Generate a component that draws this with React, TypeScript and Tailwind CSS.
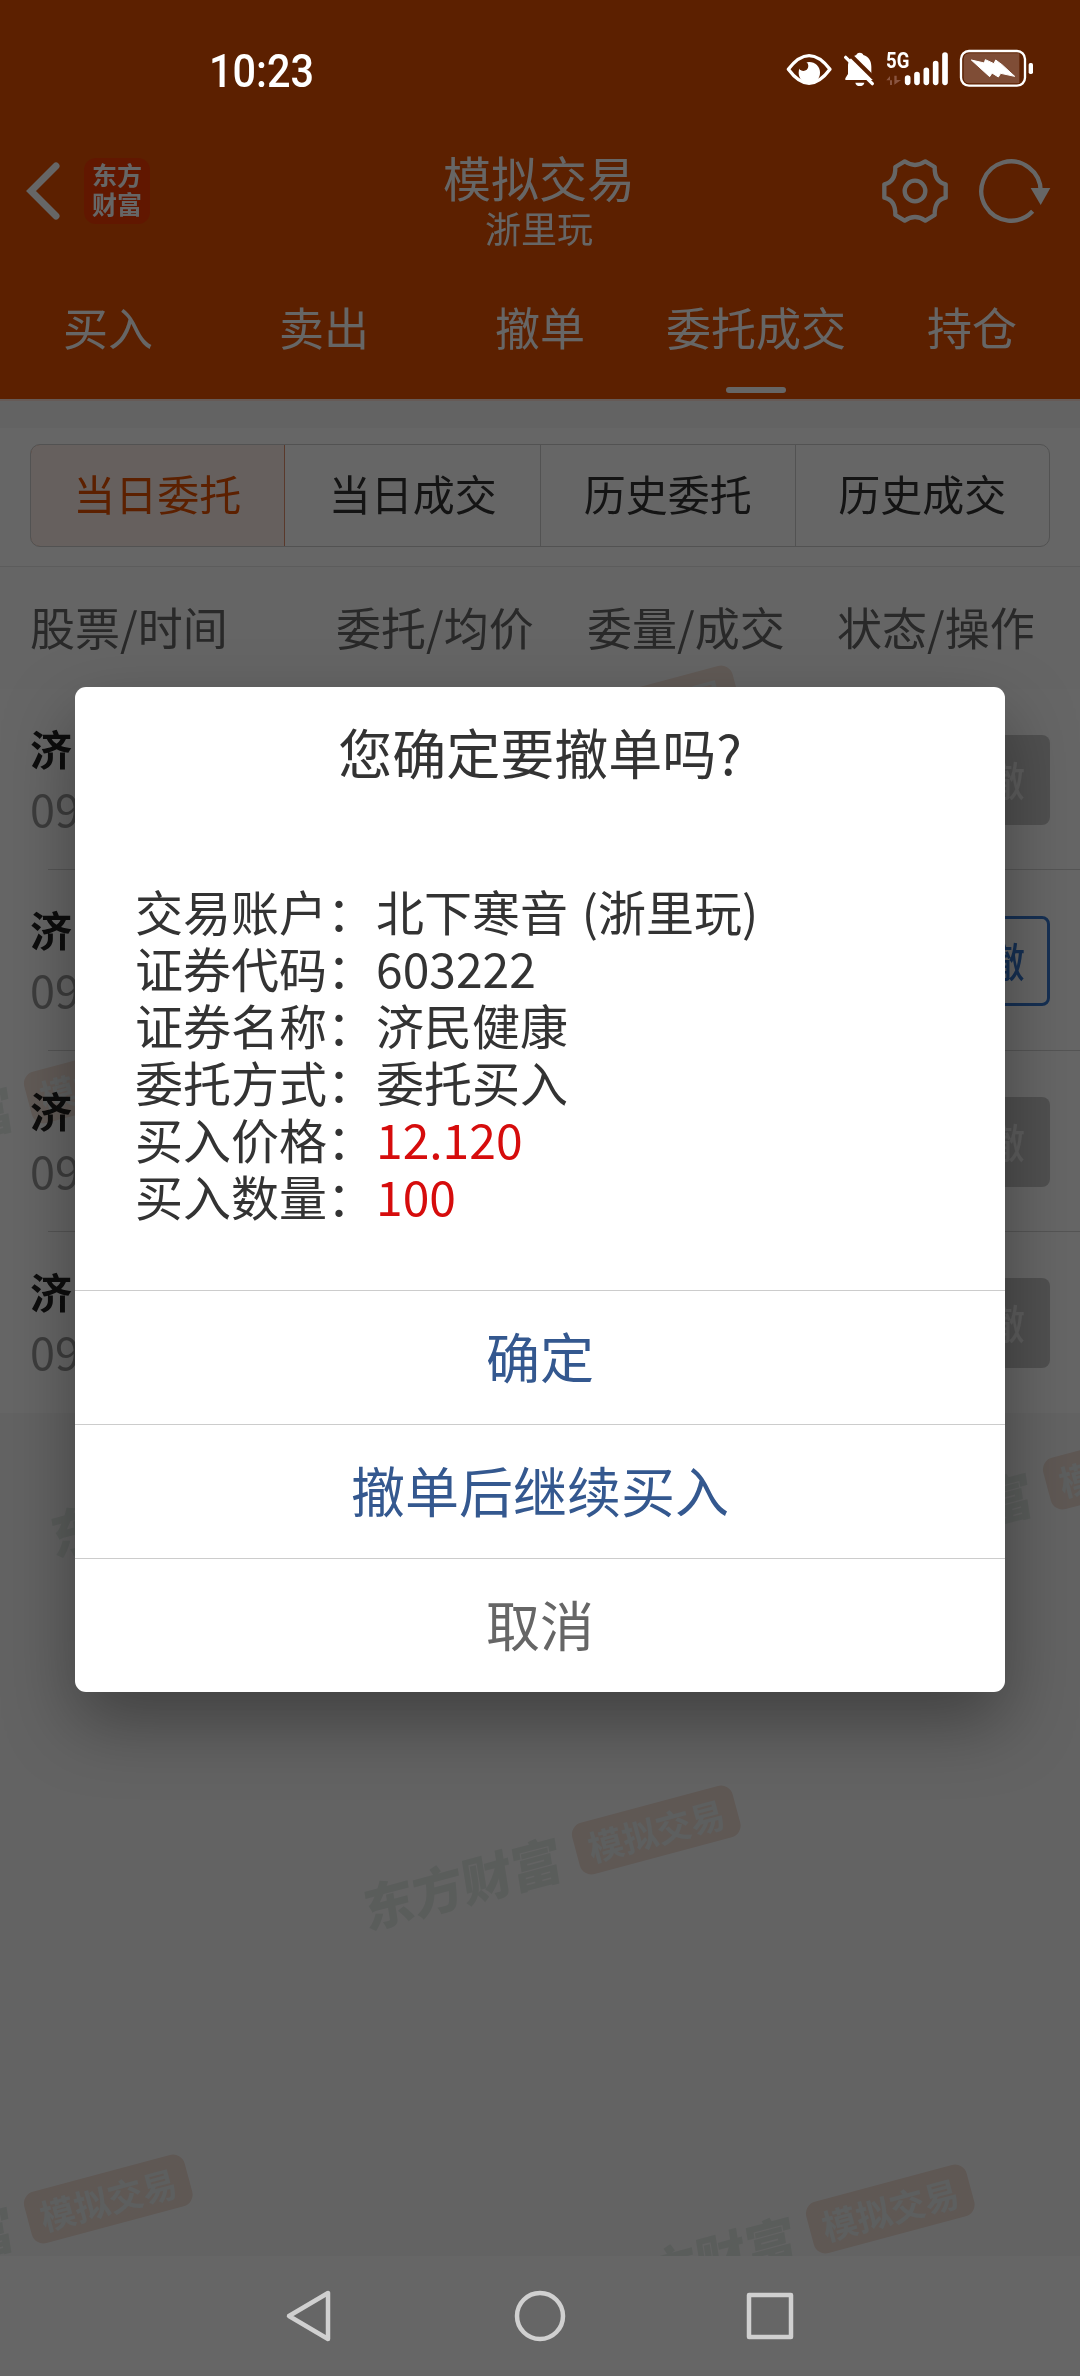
import clsx from 'clsx'

type Order = {
    name: string
    time: string
    cancellable: boolean
}

const tabs = ['买入', '卖出', '撤单', '委托成交', '持仓']
const segments = ['当日委托', '当日成交', '历史委托', '历史成交']
const columns = ['股票/时间', '委托/均价', '委量/成交', '状态/操作']

const orders: Order[] = [
    { name: '济', time: '09', cancellable: false },
    { name: '济', time: '09', cancellable: true },
    { name: '济', time: '09', cancellable: false },
    { name: '济', time: '09', cancellable: false },
]

const details = [
    { label: '交易账户', value: '北下寒音 (浙里玩)' },
    { label: '证券代码', value: '603222' },
    { label: '证券名称', value: '济民健康' },
    { label: '委托方式', value: '委托买入' },
    { label: '买入价格', value: '12.120', highlight: true },
    { label: '买入数量', value: '100', highlight: true },
]

function StatusIcons() {
    return (
        <svg width="250" height="44" viewBox="78 54 750 132" fill="none">
            {/* Eye */}
            <path d="M85 118 Q147 36 210 118 Q147 202 85 118 Z" stroke="#fff" strokeWidth="10" strokeLinejoin="round" />
            <circle cx="148" cy="128" r="32" fill="#fff" />
            <circle cx="130" cy="108" r="15" fill="#5c2000" />
            {/* Muted bell */}
            <path d="M299 68 C306 68 309 72 310 75 C327 80 334 94 334 110 V130 L341 150 H256 V145 L264 132 V108 C264 92 274 79 289 75 C290 71 293 68 299 68 Z" fill="#fff" />
            <path d="M286 158 H313 Q311 168 299 168 Q288 168 286 158 Z" fill="#fff" />
            <path d="M262 66 L350 153" stroke="#5c2000" strokeWidth="12" />
            <path d="M257 82 L337 161" stroke="#fff" strokeWidth="10" strokeLinecap="round" />
            {/* Signal */}
            <text x="378" y="114" fill="#fff" fontSize="66" fontWeight="700" textLength="70" lengthAdjust="spacingAndGlyphs" className="font-['Roboto',sans-serif]">
                5G
            </text>
            <path d="M390 165 V138 L379 151 H396 V165 Z M403 137 V164 L423 150 H410 V137 Z" fill="#8a5540" />
            <path d="M443 144 V157 M471 134 V157 M499 121 V157 M527 101 V157 M555 75 V157" stroke="#fff" strokeWidth="17" strokeLinecap="round" />
            {/* Battery */}
            <rect x="603" y="63" width="192" height="104" rx="24" stroke="#fff" strokeWidth="7" />
            <path d="M628 70 H778 V160 H628 Q611 160 611 142 V88 Q611 70 628 70 Z" fill="#7f4d36" />
            <path d="M634 90 L673 99 L676 89 L702 101 L707 90 L726 104 L764 139 L722 130 L715 141 L696 129 L689 140 Z" fill="#fff" stroke="#fff" strokeWidth="3" strokeLinejoin="round" />
            <rect x="806" y="99" width="13" height="33" rx="5" fill="#fff" />
        </svg>
    )
}

function Watermark({ className }: { className: string }) {
    return (
        <div className={clsx('absolute flex h-[53px] w-[386px] -rotate-15 items-center justify-between', className)}>
            <span className="-skew-x-6 text-[51px] leading-none font-black whitespace-nowrap text-[#e9f0ec]">东方财富</span>
            <span className="flex h-[53px] w-[166px] items-center justify-center rounded-[12px] bg-[#f5e3d9] pb-[2px] text-[35px] leading-none font-bold whitespace-nowrap text-[#f0f5f5]">
                模拟交易
            </span>
        </div>
    )
}

function Header() {
    return (
        <header className="h-[399px] bg-[#e65000] text-white">
            <div className="relative z-20 flex h-[138px] justify-between pt-[48px] pr-[44px] pl-[209px]">
                <span className="origin-left scale-x-90 text-[46px] leading-[46px] font-medium font-['Roboto',sans-serif]">10:23</span>
                <StatusIcons />
            </div>
            <div className="flex h-[105px] items-center justify-between pr-[28px] pl-[26px]">
                <div className="flex w-[210px] items-center gap-[24px]">
                    <svg width="34" height="58" viewBox="0 0 34 58" fill="none">
                        <path d="M30 4 L5 29 L30 54" stroke="#fff" strokeWidth="7" strokeLinecap="round" strokeLinejoin="miter" />
                    </svg>
                    <div className="flex h-[66px] w-[66px] flex-col items-center justify-center rounded-[12px] bg-[#f23a00] pb-[4px] text-[25px] leading-[29px] font-bold">
                        <span>东方</span>
                        <span>财富</span>
                    </div>
                </div>
                <div className="flex flex-col items-center pt-[21px]">
                    <h1 className="text-[48px] leading-[52px]">模拟交易</h1>
                    <span className="text-[36px] leading-[50px]">浙里玩</span>
                </div>
                <div className="flex w-[210px] items-center justify-end gap-[29px]">
                    <svg width="68" height="68" viewBox="-102 -102 204 204" fill="none" stroke="#fff" strokeWidth="13" strokeLinejoin="round">
                        <path d="M-31 -89 Q0 -67 31 -89 L59 -72 Q58 -27 92 -20 L92 20 Q58 27 59 72 L31 89 Q0 67 -31 89 L-59 72 Q-58 27 -92 20 L-92 -20 Q-58 -27 -59 -72 Z" />
                        <circle r="31" />
                    </svg>
                    <svg width="74" height="68" viewBox="-99 -102 222 204" fill="none">
                        <path d="M65 61 A89 89 0 1 1 89 0" stroke="#fff" strokeWidth="13" />
                        <path d="M59 -9 H118 L89 42 Z" fill="#fff" />
                    </svg>
                </div>
            </div>
            <nav className="grid h-[156px] grid-cols-5">
                {tabs.map((tab) => (
                    <div key={tab} className="flex flex-col items-center pt-[54px]">
                        <span className="text-[45px] leading-[60px]">{tab}</span>
                        {tab === '委托成交' && <span className="mt-[30px] h-[6px] w-[60px] rounded-full bg-white" />}
                    </div>
                ))}
            </nav>
        </header>
    )
}

function OrderRow({ name, time, cancellable }: Order) {
    return (
        <li className="group relative flex h-[181px] justify-between bg-white px-[30px]">
            <div className="flex flex-col pt-[29px]">
                <span className="text-[42px] leading-[60px] font-bold text-[#222]">{name}</span>
                <span className="text-[45px] leading-[60px] text-[#999]">{time}</span>
            </div>
            <span
                className={clsx(
                    'mt-[46px] flex h-[90px] w-[90px] items-center justify-center rounded-[8px] pb-[2px] text-[40px] leading-none font-medium',
                    cancellable ? 'border-[3px] border-[#3779d0] text-[#3779d0]' : 'bg-[#c8c8c8] text-[#eaeaea]',
                )}
            >
                撤
            </span>
            <span className="absolute right-0 bottom-0 left-[48px] h-px bg-[#d4d4d4] group-last:hidden" />
        </li>
    )
}

function ConfirmDialog() {
    return (
        <div className="absolute inset-0 z-10 flex items-center justify-center bg-black/60 pt-[3px]">
            <div className="flex h-[1005px] w-[930px] flex-col overflow-hidden rounded-[11px] bg-white text-[#333] shadow-[0_30px_70px_rgba(0,0,0,0.35)]">
                <h2 className="pt-[30px] text-center text-[54px] leading-[70px]">您确定要撤单吗?</h2>
                <dl className="flex-1 pt-[95px] pl-[60px] text-[48px] leading-[57px] whitespace-nowrap">
                    {details.map(({ label, value, highlight }) => (
                        <div key={label} className="flex">
                            <dt className="w-[241px] shrink-0">{label}：</dt>
                            <dd className={clsx('[word-spacing:3px]', highlight && 'text-[#d60c0c]')}>{value}</dd>
                        </div>
                    ))}
                </dl>
                <button className="h-[134px] shrink-0 border-t border-[#ccc] pb-[3px] text-[54px] leading-none text-[#34588f]">确定</button>
                <button className="h-[134px] shrink-0 border-t border-[#ccc] pb-[3px] text-[54px] leading-none text-[#34588f]">撤单后继续买入</button>
                <button className="h-[134px] shrink-0 border-t border-[#ccc] pb-[3px] text-[54px] leading-none text-[#666]">取消</button>
            </div>
        </div>
    )
}

export default function App() {
    return (
        <div className="relative flex h-[2376px] w-[1080px] flex-col overflow-hidden bg-white font-['Noto_Sans_CJK_SC',sans-serif]">
            <Header />

            <main className="relative flex flex-1 flex-col overflow-hidden border-t-2 border-[#ffe0d6] bg-[#f7f7f7]">
                <div className="mt-[27px] h-[139px] border-b border-[#e6e6e6] bg-white px-[30px] pt-[16px]">
                    <div className="grid h-[103px] grid-cols-4 overflow-hidden rounded-[10px] border border-[#ccc]">
                        {segments.map((segment, idx) => (
                            <div
                                key={segment}
                                className={clsx(
                                    'flex items-center justify-center pb-[5px] text-[42px] leading-none',
                                    idx === 0
                                        ? '-my-px mr-px -ml-px rounded-l-[10px] border border-[#e0906c] bg-[#fff0eb] text-[#e65000]'
                                        : 'text-[#333]',
                                    idx > 1 && 'border-l border-[#ccc]',
                                )}
                            >
                                {segment}
                            </div>
                        ))}
                    </div>
                </div>

                <div className="grid h-[122px] grid-cols-[306px_251px_250px_auto] items-center bg-[#fdfdfd] pb-[4px] pl-[30px] text-[45px] leading-none text-[#666]">
                    {columns.map((column) => (
                        <span key={column}>{column}</span>
                    ))}
                </div>

                <ul>
                    {orders.map((order, idx) => (
                        <OrderRow key={idx} {...order} />
                    ))}
                </ul>

                {/* Watermark tiles */}
                <div className="pointer-events-none absolute inset-0 mix-blend-multiply">
                    <Watermark className="top-[311px] left-[357px]" />
                    <Watermark className="top-[680px] left-[-191px]" />
                    <Watermark className="top-[1058px] left-[44px]" />
                    <Watermark className="top-[1066px] left-[828px]" />
                    <Watermark className="top-[1431px] left-[357px]" />
                    <Watermark className="top-[1800px] left-[-191px]" />
                    <Watermark className="top-[1810px] left-[591px]" />
                </div>
            </main>

            {/* System navigation */}
            <footer className="flex h-[120px] items-center justify-center gap-[177px] pb-[1px]">
                <svg className="relative z-20" width="54" height="54" viewBox="0 0 54 54" fill="none" stroke="#d0d0d0" strokeWidth="4.5" strokeLinejoin="round">
                    <path d="M46 4 V50 L7 27 Z" />
                </svg>
                <svg className="relative z-20" width="54" height="54" viewBox="0 0 54 54" fill="none" stroke="#d0d0d0" strokeWidth="4.5">
                    <circle cx="27" cy="27" r="23" />
                </svg>
                <svg className="relative z-20" width="54" height="54" viewBox="0 0 54 54" fill="none" stroke="#d0d0d0" strokeWidth="4.5" strokeLinejoin="round">
                    <rect x="5" y="6" width="42" height="42" />
                </svg>
            </footer>

            <ConfirmDialog />
        </div>
    )
}
